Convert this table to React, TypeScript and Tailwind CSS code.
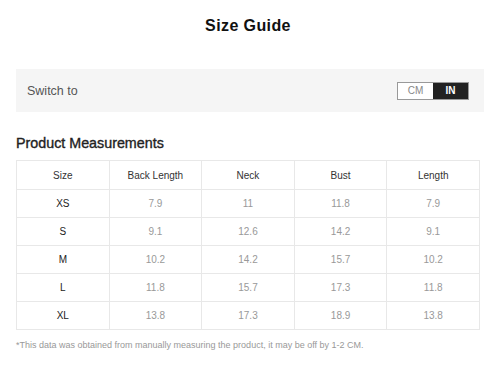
import React from "react";

const rows = [
  ["XS", "7.9", "11", "11.8", "7.9"],
  ["S", "9.1", "12.6", "14.2", "9.1"],
  ["M", "10.2", "14.2", "15.7", "10.2"],
  ["L", "11.8", "15.7", "17.3", "11.8"],
  ["XL", "13.8", "17.3", "18.9", "13.8"],
];
const heads = ["Size", "Back Length", "Neck", "Bust", "Length"];

export default function App() {
  return (
    <div className="w-[500px] h-[365px] bg-white px-4 font-['Liberation_Sans',Arial,sans-serif] overflow-hidden">
      <h1 className="pt-[14px] h-[69px] text-center text-[16px] font-bold text-[#111] tracking-[0.4px] pr-[4px]">Size Guide</h1>
      <div className="h-[43px] bg-[#f5f5f5] flex items-center justify-between pl-[11px] pr-[15px]">
        <span className="text-[12.5px] text-[#555] pt-[1px]">Switch to</span>
        <div className="flex h-[18px] border border-[#999]">
          <div className="w-[35px] bg-white text-[#888] text-[10px] flex items-center justify-center">CM</div>
          <div className="w-[35px] bg-[#222] text-white text-[10px] font-bold flex items-center justify-center">IN</div>
        </div>
      </div>
      <h2 className="mt-[22px] h-[26px] text-[14.3px] text-[#222] leading-[18px] [-webkit-text-stroke:0.35px_#222]">Product Measurements</h2>
      <table className="w-[464px] border-collapse table-fixed">
        <tbody>
          <tr className="h-[29px]">
            {heads.map((h) => (
              <td key={h} className="border border-[#e8e8e8] text-center text-[10px] text-[#333]">{h}</td>
            ))}
          </tr>
          {rows.map((r) => (
            <tr key={r[0]} className="h-[28px]">
              {r.map((c, i) => (
                <td
                  key={i}
                  className={
                    i === 0
                      ? "border border-[#e8e8e8] text-center text-[10px] text-[#222]"
                      : "border border-[#e8e8e8] text-center text-[10px] text-[#999]"
                  }
                >
                  {c}
                </td>
              ))}
            </tr>
          ))}
        </tbody>
      </table>
      <p className="mt-[9px] text-[9px] text-[#999]">*This data was obtained from manually measuring the product, it may be off by 1-2 CM.</p>
    </div>
  );
}
